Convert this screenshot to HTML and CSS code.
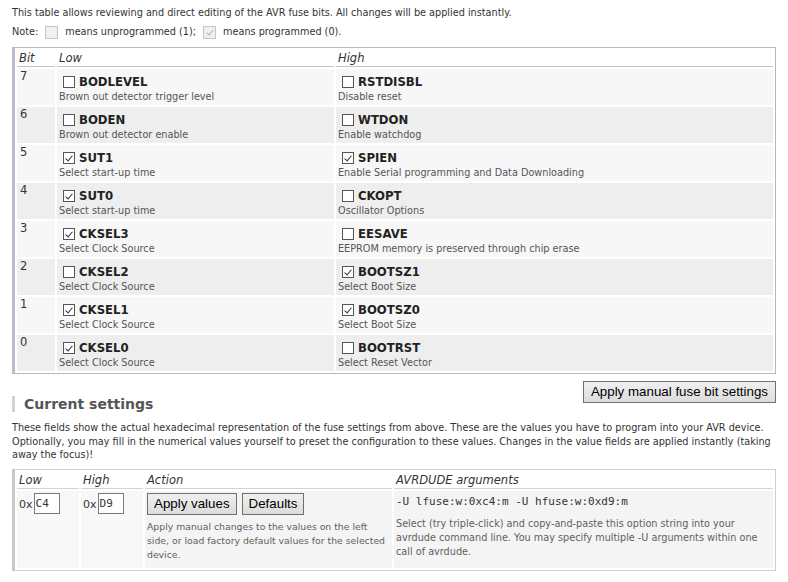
FILE: index.html
```
<!DOCTYPE html>
<html>
<head>
<meta charset="utf-8">
<link rel="stylesheet" href="styles.css">
</head>
<body>
<div class="page">
  <p class="intro">This table allows reviewing and direct editing of the AVR fuse bits. All changes will be applied instantly.</p>
  <p class="note">Note: <span class="cb cb-dis"></span> means unprogrammed (1); <span class="cb cb-dis cb-on"></span> means programmed (0).</p>

  <table class="fuses">
    <colgroup><col class="c-bit"><col class="c-low"><col class="c-high"></colgroup>
    <thead>
      <tr><th>Bit</th><th>Low</th><th>High</th></tr>
    </thead>
    <tbody>
      <tr class="odd">
        <td class="bit">7</td>
        <td><div class="name"><span class="cb"></span>BODLEVEL</div><div class="desc">Brown out detector trigger level</div></td>
        <td><div class="name"><span class="cb"></span>RSTDISBL</div><div class="desc">Disable reset</div></td>
      </tr>
      <tr class="even">
        <td class="bit">6</td>
        <td><div class="name"><span class="cb"></span>BODEN</div><div class="desc">Brown out detector enable</div></td>
        <td><div class="name"><span class="cb"></span>WTDON</div><div class="desc">Enable watchdog</div></td>
      </tr>
      <tr class="odd">
        <td class="bit">5</td>
        <td><div class="name"><span class="cb cb-on"></span>SUT1</div><div class="desc">Select start-up time</div></td>
        <td><div class="name"><span class="cb cb-on"></span>SPIEN</div><div class="desc">Enable Serial programming and Data Downloading</div></td>
      </tr>
      <tr class="even">
        <td class="bit">4</td>
        <td><div class="name"><span class="cb cb-on"></span>SUT0</div><div class="desc">Select start-up time</div></td>
        <td><div class="name"><span class="cb"></span>CKOPT</div><div class="desc">Oscillator Options</div></td>
      </tr>
      <tr class="odd">
        <td class="bit">3</td>
        <td><div class="name"><span class="cb cb-on"></span>CKSEL3</div><div class="desc">Select Clock Source</div></td>
        <td><div class="name"><span class="cb"></span>EESAVE</div><div class="desc">EEPROM memory is preserved through chip erase</div></td>
      </tr>
      <tr class="even">
        <td class="bit">2</td>
        <td><div class="name"><span class="cb"></span>CKSEL2</div><div class="desc">Select Clock Source</div></td>
        <td><div class="name"><span class="cb cb-on"></span>BOOTSZ1</div><div class="desc">Select Boot Size</div></td>
      </tr>
      <tr class="odd">
        <td class="bit">1</td>
        <td><div class="name"><span class="cb cb-on"></span>CKSEL1</div><div class="desc">Select Clock Source</div></td>
        <td><div class="name"><span class="cb cb-on"></span>BOOTSZ0</div><div class="desc">Select Boot Size</div></td>
      </tr>
      <tr class="even">
        <td class="bit">0</td>
        <td><div class="name"><span class="cb cb-on"></span>CKSEL0</div><div class="desc">Select Clock Source</div></td>
        <td><div class="name"><span class="cb"></span>BOOTRST</div><div class="desc">Select Reset Vector</div></td>
      </tr>
    </tbody>
  </table>

  <div class="apply-row"><button class="btn">Apply manual fuse bit settings</button></div>

  <h2 class="section">Current settings</h2>
  <p class="info">These fields show the actual hexadecimal representation of the fuse settings from above. These are the values you have to program into your AVR device. Optionally, you may fill in the numerical values yourself to preset the configuration to these values. Changes in the value fields are applied instantly (taking away the focus)!</p>

  <table class="current">
    <colgroup><col class="k-low"><col class="k-high"><col class="k-act"><col class="k-arg"></colgroup>
    <thead>
      <tr><th>Low</th><th>High</th><th>Action</th><th>AVRDUDE arguments</th></tr>
    </thead>
    <tbody>
      <tr>
        <td class="val"><span class="hex">0x</span><span class="inp">C4</span></td>
        <td class="val"><span class="hex">0x</span><span class="inp">D9</span></td>
        <td class="act">
          <div class="btns"><button class="btn">Apply values</button><button class="btn">Defaults</button></div>
          <div class="small">Apply manual changes to the values on the left side, or load factory default values for the selected device.</div>
        </td>
        <td class="arg">
          <div class="mono">-U lfuse:w:0xc4:m -U hfuse:w:0xd9:m</div>
          <div class="small">Select (try triple-click) and copy-and-paste this option string into your avrdude command line. You may specify multiple -U arguments within one call of avrdude.</div>
        </td>
      </tr>
    </tbody>
  </table>
</div>
</body>
</html>
```

FILE: styles.css
```
html, body {
  margin: 0;
  padding: 0;
  background: #ffffff;
}
body {
  font-family: "DejaVu Sans", Verdana, sans-serif;
  font-size: 9.7px;
  color: #333333;
}
.page {
  padding: 5px 12px 0 12px;
}
p {
  margin: 0;
}
.intro {
  line-height: 16px;
}
.note {
  margin-top: 2px;
  line-height: 16px;
  height: 18px;
  display: flex;
  align-items: center;
  gap: 6px;
}
.note .cb {
  margin: 0 1px;
}
.cb {
  display: inline-block;
  box-sizing: border-box;
  width: 12px;
  height: 12px;
  border: 1px solid #555555;
  background: #ffffff;
  position: relative;
  vertical-align: middle;
  flex: none;
}
.cb-on::after {
  content: "";
  position: absolute;
  left: 3px;
  top: 1px;
  width: 3px;
  height: 6px;
  border: solid #333333;
  border-width: 0 1px 1px 0;
  transform: rotate(40deg);
}
.cb-dis {
  width: 13px;
  height: 13px;
  border-color: #c4c4c4;
  background: #f0f0f0;
}
.cb-dis.cb-on::after {
  border-color: #b4b4b4;
  left: 4px;
}

/* fuse table */
.fuses {
  margin-top: 6px;
  width: 764px;
  border: 1px solid #b8b8b8;
  border-left: 3px solid #bcbcd0;
  border-spacing: 2px;
  table-layout: fixed;
}
.c-bit { width: 38px; }
.c-low { width: 277px; }
.fuses th {
  text-align: left;
  font-weight: normal;
  font-style: italic;
  font-size: 11.5px;
  color: #333333;
  padding: 0 2px 1px 2px;
  height: 15px;
  border-bottom: 1px solid #c4c4c4;
  background: #ffffff;
}
.fuses td {
  vertical-align: top;
  padding: 0 2px;
  height: 36px;
  box-sizing: border-box;
}
.fuses tr.odd td { background: #f7f7f7; }
.fuses tr.even td { background: #eeeeee; }
.fuses td.bit {
  font-size: 11.5px;
  padding: 1px 2px 0 3px;
  line-height: 13px;
}
.name {
  display: flex;
  align-items: center;
  height: 18px;
  margin-top: 4px;
  font-weight: bold;
  font-size: 11.7px;
  color: #222222;
}
.name .cb {
  margin: 0 4px 0 4px;
}
.desc {
  font-size: 9.7px;
  color: #555555;
  line-height: 12px;
  margin-top: 0;
}

.apply-row {
  display: flex;
  justify-content: flex-end;
  margin-top: 7px;
}
.btn {
  font-family: "Liberation Sans", Arial, sans-serif;
  font-size: 13.33px;
  color: #000000;
  background: linear-gradient(#f0f0f0, #dcdcdc);
  border: 1px solid #707070;
  padding: 1px 7px 2px 7px;
  height: 22px;
  margin: 0;
}

.section {
  margin: -7px 0 0 0;
  padding-left: 9px;
  border-left: 3px solid #d4d4d4;
  font-size: 14px;
  font-weight: bold;
  color: #555555;
  line-height: 16px;
}
.info {
  margin-top: 9px;
  line-height: 13.5px;
}

/* current settings table */
.current {
  margin-top: 7px;
  width: 764px;
  border: 1px solid #ccd2d2;
  border-left: 3px solid #c4cccc;
  border-spacing: 2px;
  table-layout: fixed;
}
.k-low { width: 62px; }
.k-high { width: 62px; }
.k-act { width: 247px; }
.current th {
  text-align: left;
  font-weight: normal;
  font-style: italic;
  font-size: 11.5px;
  color: #333333;
  padding: 1px 2px 0 2px;
  height: 15px;
  border-bottom: 1px solid #cfd4d4;
  background: #ffffff;
}
.current td {
  vertical-align: top;
  background: #f4f4f4;
  padding: 2px 2px 0 2px;
  height: 77px;
  box-sizing: border-box;
}
.current td.val {
  background: #f8f8f8;
}
.current td.act {
  padding-right: 0;
}
.val {
  font-size: 11px;
}
.hex {
  display: inline-block;
  margin-top: 5px;
  vertical-align: top;
}
.inp {
  display: inline-block;
  box-sizing: border-box;
  width: 26px;
  height: 21px;
  border: 1px solid #7a7a7a;
  background: #ffffff;
  font-family: "DejaVu Sans Mono", monospace;
  font-size: 11px;
  line-height: 19px;
  padding-left: 1px;
  vertical-align: top;
  margin-left: 1px;
}
.btns {
  display: flex;
  gap: 5px;
}
.btns .btn {
  padding: 1px 6px 2px 6px;
}
.small {
  color: #606060;
  font-size: 9.7px;
  line-height: 14px;
  margin-top: 5px;
}
.act .small {
  font-size: 9.3px;
}
.mono {
  font-family: "DejaVu Sans Mono", monospace;
  font-size: 11px;
  color: #333333;
  margin-top: 2px;
  line-height: 14px;
}
.arg .small {
  margin-top: 8px;
}
```
